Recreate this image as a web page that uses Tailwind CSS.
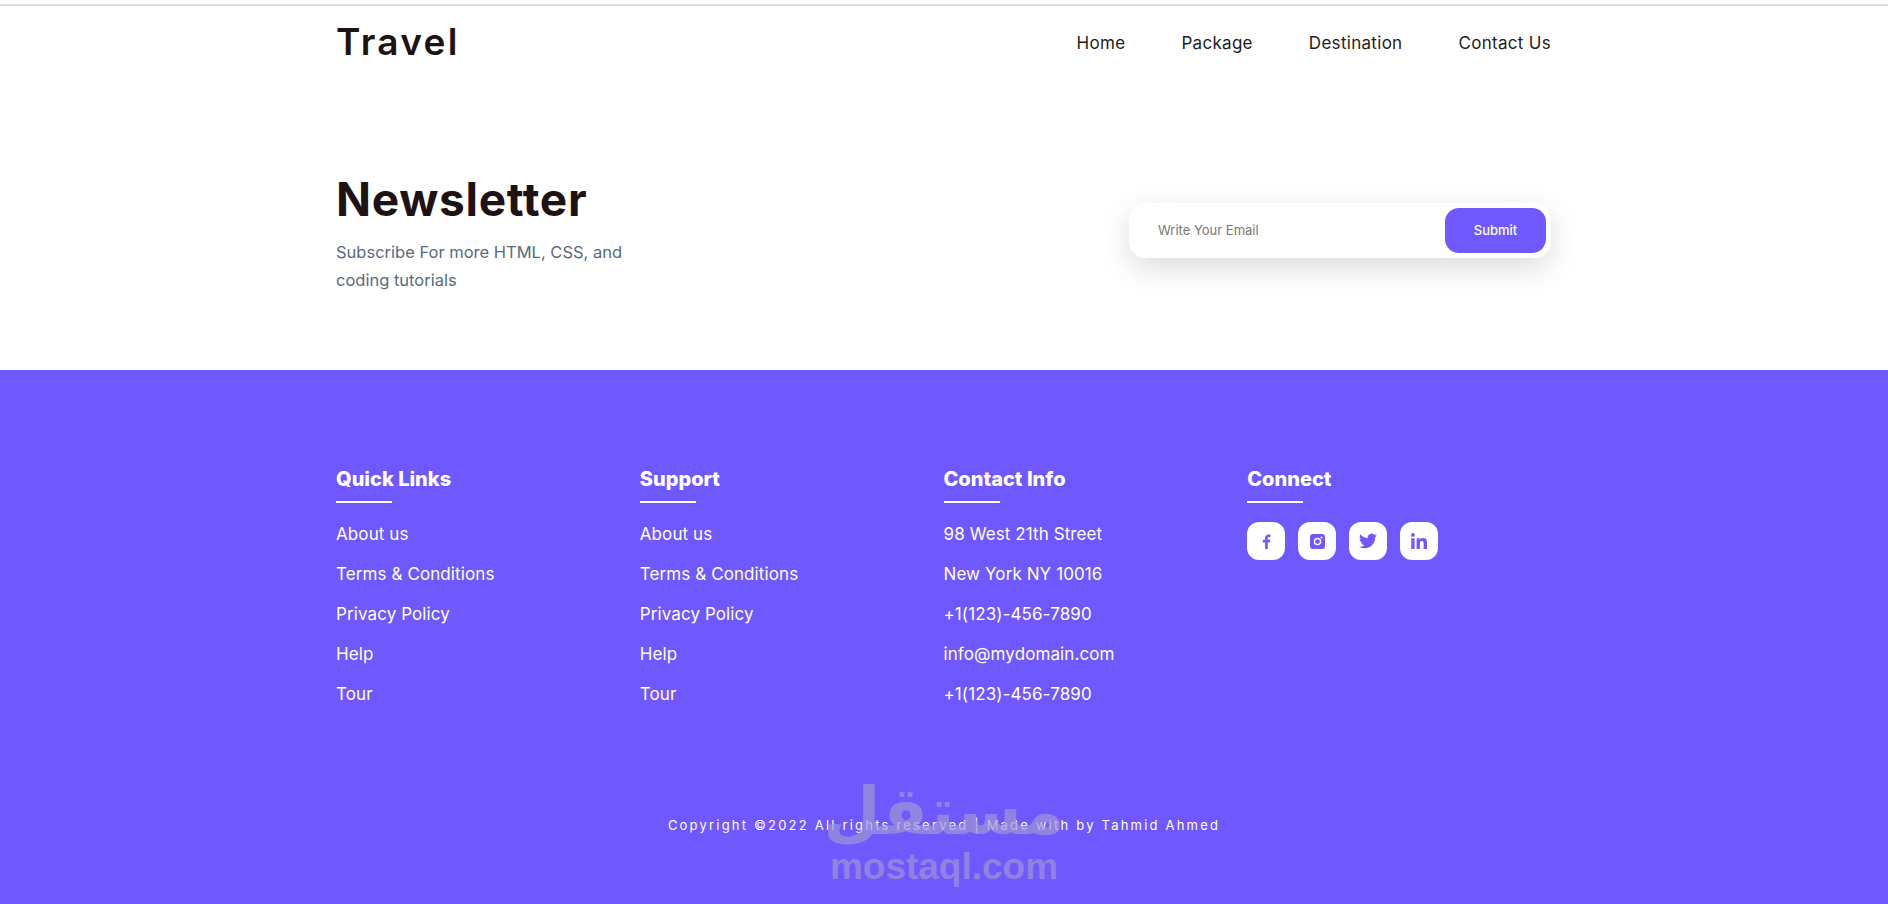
<!DOCTYPE html>
<html lang="en">
<head>
  <meta charset="UTF-8" />
  <meta name="viewport" content="width=device-width, initial-scale=1" />
  <title>Travel - Newsletter</title>
  <script src="https://cdn.jsdelivr.net/npm/@tailwindcss/browser@4"></script>
</head>
<body class="bg-white font-['Inter',sans-serif] h-[904px] overflow-hidden">
  <!-- Header -->
  <header class="h-[84px] border-t-2 border-[#dedede] mt-[4px] -mb-[4px]">
    <div class="w-[1215px] ml-[336px] flex justify-between items-center h-[72px]">
      <h1 class="text-[37px] font-semibold tracking-[2.3px] text-[#1e1212] leading-none pb-[2px]">Travel</h1>
      <nav class="flex gap-[56px] text-[17px] tracking-[0.3px] text-[#241c1c] pt-[3px]">
        <a href="#">Home</a>
        <a href="#">Package</a>
        <a href="#">Destination</a>
        <a href="#">Contact Us</a>
      </nav>
    </div>
  </header>

  <!-- Newsletter -->
  <section class="h-[286px] w-[1215px] ml-[336px] flex justify-between">
    <div class="pt-[87px]">
      <h2 class="text-[46px] font-bold text-[#1e1212] leading-[56px] tracking-[0.7px]">Newsletter</h2>
      <p class="mt-[11px] text-[16.5px] leading-[28px] text-[#5b6b80] w-[310px]">Subscribe For more HTML, CSS, and coding tutorials</p>
    </div>
    <form class="mt-[119px] w-[422px] h-[55px] bg-white rounded-[16px] shadow-[0_10px_30px_rgba(0,0,0,0.14)] flex items-center justify-between pl-[29px] pr-[5px]">
      <input type="text" placeholder="Write Your Email" class="text-[13px] outline-none w-[260px] pt-[1px] placeholder:text-[#7c7672]" />
      <button type="button" class="w-[101px] h-[45px] bg-[#7058ff] rounded-[14px] text-white text-[13px] font-medium pt-[1px]">Submit</button>
    </form>
  </section>

  <!-- Footer -->
  <footer class="bg-[#7058ff] h-[534px] relative text-white">
    <div class="w-[1215px] ml-[336px] grid grid-cols-4 pt-[96px]">
      <div>
        <h3 class="text-[20px] font-extrabold leading-[26px]">Quick Links</h3>
        <div class="w-[56px] h-[2px] bg-white mt-[9px] mb-[11px]"></div>
        <ul class="text-[17px] leading-[40px] tracking-[0.1px]">
          <li>About us</li>
          <li>Terms &amp; Conditions</li>
          <li>Privacy Policy</li>
          <li>Help</li>
          <li>Tour</li>
        </ul>
      </div>
      <div>
        <h3 class="text-[20px] font-extrabold leading-[26px]">Support</h3>
        <div class="w-[56px] h-[2px] bg-white mt-[9px] mb-[11px]"></div>
        <ul class="text-[17px] leading-[40px] tracking-[0.1px]">
          <li>About us</li>
          <li>Terms &amp; Conditions</li>
          <li>Privacy Policy</li>
          <li>Help</li>
          <li>Tour</li>
        </ul>
      </div>
      <div>
        <h3 class="text-[20px] font-extrabold leading-[26px]">Contact Info</h3>
        <div class="w-[56px] h-[2px] bg-white mt-[9px] mb-[11px]"></div>
        <ul class="text-[17px] leading-[40px] tracking-[0.1px]">
          <li>98 West 21th Street</li>
          <li>New York NY 10016</li>
          <li>+1(123)-456-7890</li>
          <li>info@mydomain.com</li>
          <li>+1(123)-456-7890</li>
        </ul>
      </div>
      <div>
        <h3 class="text-[20px] font-extrabold leading-[26px]">Connect</h3>
        <div class="w-[56px] h-[2px] bg-white mt-[9px] mb-[19px]"></div>
        <div class="flex gap-[13px] text-[#7058ff]">
          <a href="#" class="w-[38px] h-[38px] bg-white rounded-[12px] flex items-center justify-center">
            <svg viewBox="0 0 24 24" class="w-[15px] h-[15px]" fill="currentColor"><path d="M14 24v-10.5h3.6l.6-4.2H14V6.7c0-1.2.4-2 2.1-2h2.2V.9C17.9.8 16.6.7 15.2.7 12 .7 9.8 2.7 9.8 6.2v3.1H6.2v4.2h3.6V24z"/></svg>
          </a>
          <a href="#" class="w-[38px] h-[38px] bg-white rounded-[12px] flex items-center justify-center">
            <svg viewBox="0 0 24 24" class="w-[15px] h-[15px]" fill="currentColor"><path fill-rule="evenodd" d="M5 0h14a5 5 0 0 1 5 5v14a5 5 0 0 1-5 5H5a5 5 0 0 1-5-5V5a5 5 0 0 1 5-5zm7 6a6 6 0 1 0 0 12 6 6 0 0 0 0-12zm0 2.2a3.8 3.8 0 1 1 0 7.6 3.8 3.8 0 0 1 0-7.6zM18.4 3.8a1.6 1.6 0 1 0 0 3.2 1.6 1.6 0 0 0 0-3.2z"/></svg>
          </a>
          <a href="#" class="w-[38px] h-[38px] bg-white rounded-[12px] flex items-center justify-center">
            <svg viewBox="0 0 24 24" class="w-[18px] h-[18px]" fill="currentColor"><path d="M23.95 4.57a10 10 0 0 1-2.82.77 4.96 4.96 0 0 0 2.16-2.72c-.95.55-2 .96-3.12 1.19a4.92 4.92 0 0 0-8.38 4.48C7.69 8.1 4.07 6.13 1.64 3.16a4.82 4.82 0 0 0-.67 2.48c0 1.71.87 3.21 2.19 4.1a4.9 4.9 0 0 1-2.23-.62v.06a4.92 4.92 0 0 0 3.95 4.83 4.9 4.9 0 0 1-2.21.08 4.94 4.94 0 0 0 4.6 3.42A9.87 9.87 0 0 1 0 19.54a13.94 13.94 0 0 0 7.55 2.21c9.05 0 14-7.5 14-13.98 0-.21 0-.42-.02-.63a9.94 9.94 0 0 0 2.42-2.57z"/></svg>
          </a>
          <a href="#" class="w-[38px] h-[38px] bg-white rounded-[12px] flex items-center justify-center">
            <svg viewBox="0 0 24 24" class="w-[16px] h-[16px]" fill="currentColor"><path d="M5.4 24H.4V8h5zM2.9 5.8A2.9 2.9 0 1 1 2.9 0a2.9 2.9 0 0 1 0 5.8zM24 24h-5v-7.8c0-1.9 0-4.2-2.6-4.2s-3 2-3 4.1V24h-5V8h4.8v2.2h.1c.7-1.3 2.3-2.6 4.7-2.6 5 0 6 3.3 6 7.6z"/></svg>
          </a>
        </div>
      </div>
    </div>
    <p class="absolute top-[445px] left-0 w-full text-center text-[13px] leading-[20px] tracking-[2.2px]">Copyright ©2022 All rights reserved | Made with by Tahmid Ahmed</p>

    <!-- watermark -->
    <div class="absolute left-[800px] top-[405px] w-[288px] flex flex-col items-center text-[#a096d3]/70 pointer-events-none">
      <span class="font-['DejaVu_Sans',sans-serif] font-bold text-[66px] leading-[73px]" dir="rtl" lang="ar">مستقل</span>
      <span class="font-['Liberation_Sans',sans-serif] font-bold text-[37px] leading-[38px]">mostaql.com</span>
    </div>
  </footer>
</body>
</html>
